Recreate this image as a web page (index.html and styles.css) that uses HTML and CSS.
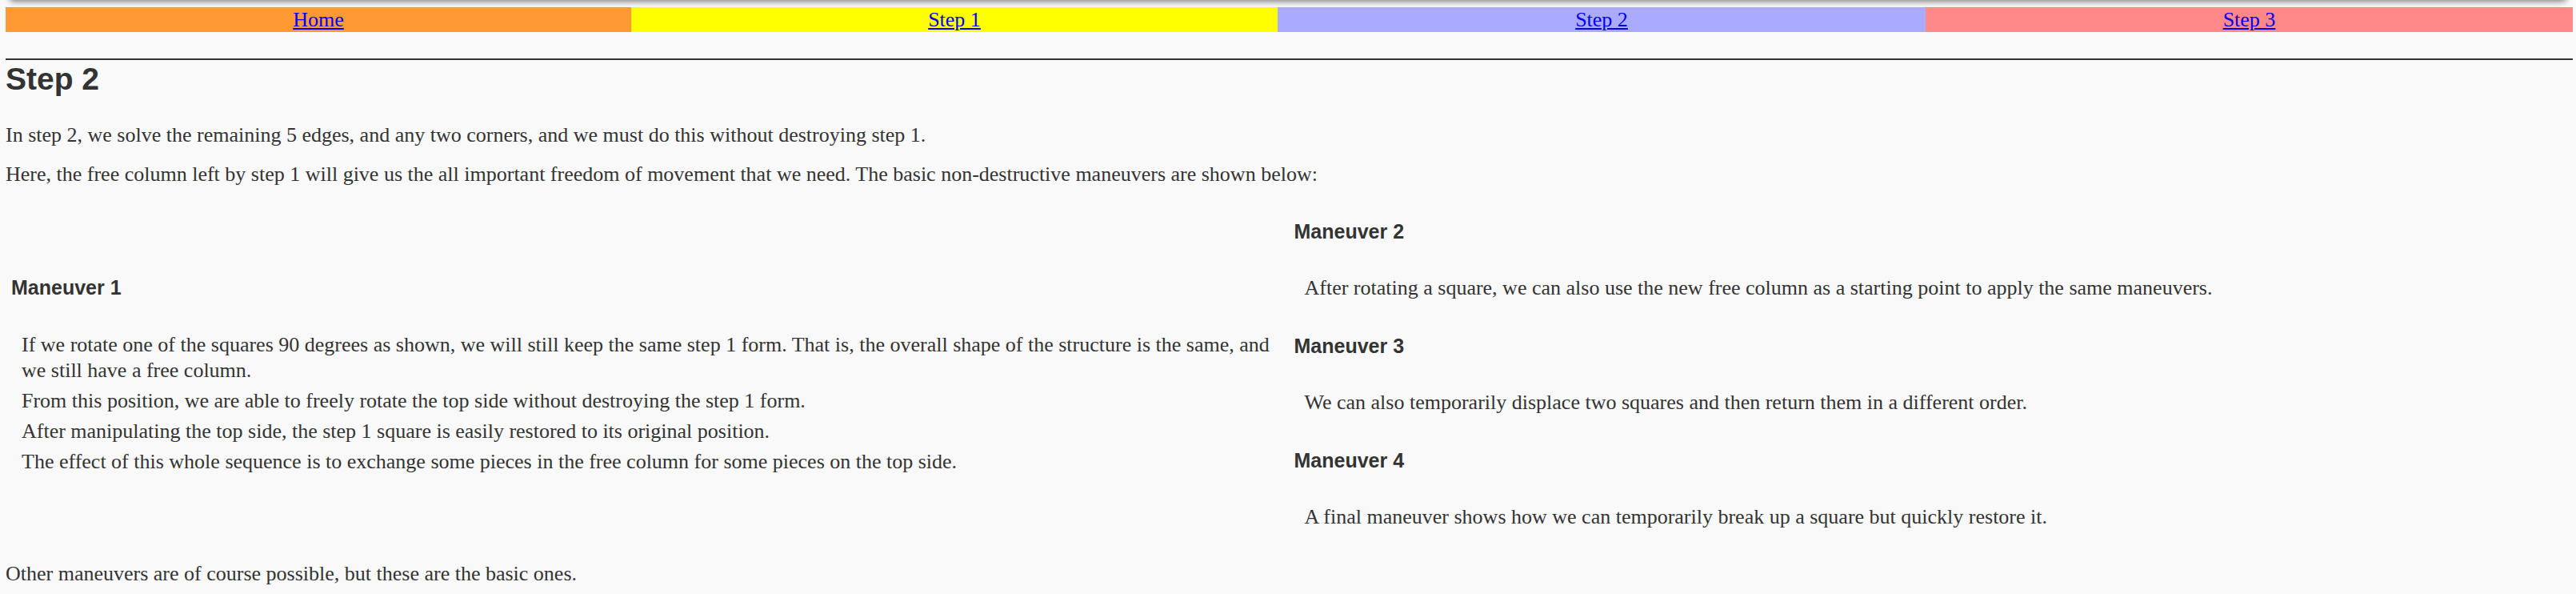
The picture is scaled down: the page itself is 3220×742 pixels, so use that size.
FILE: index.html
```html
<!DOCTYPE html>
<html lang="en">
<head>
<meta charset="utf-8">
<title>Step 2</title>
<link rel="stylesheet" href="styles.css">
</head>
<body>
<div class="topshade"></div>
<nav class="steps">
  <div class="step step-home"><a href="#">Home</a></div>
  <div class="step step-one"><a href="#">Step 1</a></div>
  <div class="step step-two"><a href="#">Step 2</a></div>
  <div class="step step-three"><a href="#">Step 3</a></div>
</nav>
<hr class="rule">
<h2 class="title">Step 2</h2>
<p class="intro">In step 2, we solve the remaining 5 edges, and any two corners, and we must do this without destroying step 1.</p>
<p class="intro">Here, the free column left by step 1 will give us the all important freedom of movement that we need. The basic non-destructive maneuvers are shown below:</p>
<div class="maneuvers">
  <div class="col col-left">
    <h3 class="mv-title">Maneuver 1</h3>
    <div class="notes">
      <p class="note">If we rotate one of the squares 90 degrees as shown, we will still keep the same step 1 form. That is, the overall shape of the structure is the same, and we still have a free column.</p>
      <p class="note">From this position, we are able to freely rotate the top side without destroying the step 1 form.</p>
      <p class="note">After manipulating the top side, the step 1 square is easily restored to its original position.</p>
      <p class="note">The effect of this whole sequence is to exchange some pieces in the free column for some pieces on the top side.</p>
    </div>
  </div>
  <div class="col col-right">
    <section class="mv">
      <h3 class="mv-title">Maneuver 2</h3>
      <p class="note">After rotating a square, we can also use the new free column as a starting point to apply the same maneuvers.</p>
    </section>
    <section class="mv">
      <h3 class="mv-title">Maneuver 3</h3>
      <p class="note">We can also temporarily displace two squares and then return them in a different order.</p>
    </section>
    <section class="mv">
      <h3 class="mv-title">Maneuver 4</h3>
      <p class="note">A final maneuver shows how we can temporarily break up a square but quickly restore it.</p>
    </section>
  </div>
</div>
<p class="outro">Other maneuvers are of course possible, but these are the basic ones.</p>
</body>
</html>
```
FILE: styles.css
```css
html {
  background: #f9f9f9;
}
body {
  position: relative;
  margin: 0;
  padding: 9px 4px 0 7px;
  background: #f9f9f9;
  color: #333333;
  font-family: "Liberation Serif", "Times New Roman", serif;
  font-size: 26px;
  overflow: hidden;
  min-height: 742px;
  box-sizing: border-box;
}
.topshade {
  position: absolute;
  top: -10px;
  left: 14px;
  right: 14px;
  height: 10px;
  box-shadow: 0 0 8px 1px rgba(0, 0, 0, 0.6);
}
.steps {
  display: grid;
  grid-template-columns: 782fr 808fr 810fr 809fr;
  height: 31px;
  line-height: 31px;
  text-align: center;
}
.steps a {
  color: #0000ee;
}
.step-home { background: #ff9933; }
.step-one { background: #ffff00; }
.step-two { background: #aaaaff; }
.step-three { background: #ff8888; }
.rule {
  margin: 33px 0 0;
  border: 0;
  border-top: 2px solid #333333;
  height: 0;
}
.title {
  margin: 1px 0 32px;
  font: 700 39px/45px "Liberation Sans", Arial, sans-serif;
}
.intro {
  margin: 0 0 17px;
  line-height: 32px;
}
.maneuvers {
  display: grid;
  grid-template-columns: 1fr 1fr;
  column-gap: 2px;
  align-items: center;
  padding: 0 2px;
  margin-top: 41px;
}
.col {
  padding: 0 5px;
}
.col-right {
  display: flex;
  flex-direction: column;
  gap: 42px;
}
.mv-title {
  margin: 0 0 40px;
  font: 700 25px/29px "Liberation Sans", Arial, sans-serif;
}
.col-left .mv-title {
  margin-bottom: 41px;
}
.notes {
  display: flex;
  flex-direction: column;
  gap: 6px;
}
.note {
  margin: 0;
  padding-left: 13px;
  line-height: 32px;
}
.outro {
  margin: 39px 0 0;
  line-height: 32px;
}
```
